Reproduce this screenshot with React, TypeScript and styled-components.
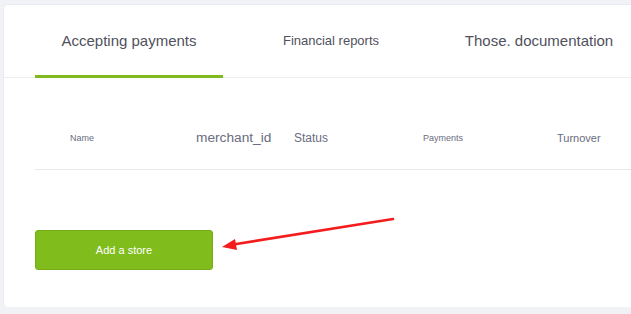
import styled, { createGlobalStyle } from "styled-components";

const GlobalStyle = createGlobalStyle`
  html, body {
    margin: 0;
    padding: 0;
    background: #f0f2f6;
    font-family: "Liberation Sans", Arial, sans-serif;
    overflow: hidden;
  }
`;

const tabs = [
  { label: "Accepting payments", width: 188, size: 15, active: true },
  { label: "Financial reports", width: 216, size: 13, active: false },
  { label: "Those. documentation", width: 200, size: 15, active: false },
];

const columns = [
  { label: "Name", width: 161, size: 9, pad: 35 },
  { label: "merchant_id", width: 98, size: 13.7, pad: 0 },
  { label: "Status", width: 129, size: 12, pad: 0 },
  { label: "Payments", width: 134, size: 9, pad: 0 },
  { label: "Turnover", width: 80, size: 11, pad: 0 },
];

function App() {
  return (
    <>
      <GlobalStyle />
      <Card>
        <TabBar>
          {tabs.map((t) => (
            <Tab key={t.label} $width={t.width} $size={t.size} $active={t.active}>
              {t.label}
            </Tab>
          ))}
        </TabBar>

        <Body>
          <HeaderRow>
            {columns.map((c) => (
              <HeaderCell key={c.label} $width={c.width} $size={c.size} $pad={c.pad}>
                {c.label}
              </HeaderCell>
            ))}
          </HeaderRow>

          <Actions>
            <AddButton type="button">Add a store</AddButton>
          </Actions>
        </Body>

        <Arrow width="180" height="40" viewBox="0 0 180 40">
          <line x1="175" y1="3" x2="12" y2="29" stroke="#f41d1d" strokeWidth="2.6" strokeLinecap="round" />
          <polygon points="4,31 17,23 19,34" fill="#f41d1d" />
        </Arrow>
      </Card>
    </>
  );
}

const Card = styled.div`
  position: relative;
  margin: 5px 0 0 4px;
  width: 640px;
  height: 302px;
  background: #ffffff;
  border-radius: 4px;
  box-shadow: 0 0 0 1px #e8ebf1;
`;

const TabBar = styled.div`
  display: flex;
  padding-left: 31px;
  height: 72px;
  border-bottom: 1px solid #eceef2;
`;

const Tab = styled.div<{ $width: number; $size: number; $active: boolean }>`
  width: ${(p) => p.$width}px;
  box-sizing: border-box;
  display: flex;
  align-items: center;
  justify-content: center;
  font-size: ${(p) => p.$size}px;
  color: #50515c;
  border-bottom: 3px solid ${(p) => (p.$active ? "#7fbb1f" : "transparent")};
  margin-bottom: -1px;
`;

const Body = styled.div`
  padding-left: 31px;
`;

const HeaderRow = styled.div`
  display: flex;
  align-items: center;
  height: 92px;
  padding-top: 28px;
  box-sizing: border-box;
  border-bottom: 1px solid #e6e8ee;
`;

const HeaderCell = styled.div<{ $width: number; $size: number; $pad: number }>`
  width: ${(p) => p.$width}px;
  padding-left: ${(p) => p.$pad}px;
  box-sizing: border-box;
  font-size: ${(p) => p.$size}px;
  color: #6a6c80;
  flex-shrink: 0;
`;

const Actions = styled.div`
  padding-top: 60px;
`;

const AddButton = styled.button`
  width: 178px;
  height: 40px;
  background: #80bc1c;
  border: 1px solid #74ad16;
  border-radius: 3px;
  color: #ffffff;
  font-family: "Liberation Sans", Arial, sans-serif;
  font-size: 11px;
  cursor: pointer;
`;

const Arrow = styled.svg`
  position: absolute;
  left: 214px;
  top: 211px;
  overflow: visible;
`;

export default App;
